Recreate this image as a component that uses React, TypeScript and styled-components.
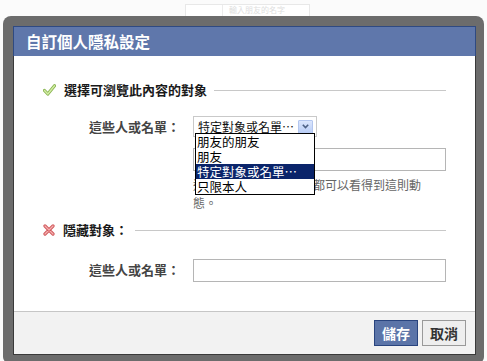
import React from "react";
import styled, { createGlobalStyle } from "styled-components";

const GlobalStyle = createGlobalStyle`
  html, body {
    margin: 0;
    padding: 0;
    background: #ffffff;
  }
  body {
    font-family: "Noto Sans CJK TC", "Noto Sans", sans-serif;
  }
  * { box-sizing: border-box; }
`;

const options = ["朋友的朋友", "朋友", "特定對象或名單⋯", "只限本人"];

const CheckIcon = () => (
  <svg width="13" height="12" viewBox="0 0 13 12">
    <path d="M1.5 6.5 L4.8 10 L11.5 1.8" fill="none" stroke="#8ab452" strokeWidth="3.2" strokeLinecap="round" strokeLinejoin="round" />
    <path d="M1.5 6.5 L4.8 10 L11.5 1.8" fill="none" stroke="#d2eda3" strokeWidth="1.4" strokeLinecap="round" strokeLinejoin="round" />
  </svg>
);

const CrossIcon = () => (
  <svg width="12" height="12" viewBox="0 0 12 12">
    <path d="M2 2 L10 10 M10 2 L2 10" fill="none" stroke="#d0585b" strokeWidth="3.2" strokeLinecap="round" />
    <path d="M2 2 L10 10 M10 2 L2 10" fill="none" stroke="#f5b0b0" strokeWidth="1.3" strokeLinecap="round" />
  </svg>
);

const ArrowIcon = () => (
  <svg width="7" height="5" viewBox="0 0 7 5">
    <path d="M0.8 0.8 L3.5 3.6 L6.2 0.8" fill="none" stroke="#4d6185" strokeWidth="1.6" />
  </svg>
);

export default function App() {
  return (
    <>
      <GlobalStyle />
      <Page>
        <TopBar>
          <SearchBox>
            <SearchButton />
            <SearchField>輸入朋友的名字</SearchField>
          </SearchBox>
        </TopBar>
        <Frame>
          <Dialog>
            <Title>自訂個人隱私設定</Title>
            <Body>
              <SectionHead>
                <CheckIcon />
                <HeadText>選擇可瀏覽此內容的對象</HeadText>
                <Rule />
              </SectionHead>
              <Row $top={19}>
                <Label>這些人或名單：</Label>
                <Field>
                  <SelectWrap>
                    <Select>
                      <SelectText>特定對象或名單⋯</SelectText>
                      <ArrowButton><ArrowIcon /></ArrowButton>
                    </Select>
                    <OptionList>
                      {options.map((o, i) => (
                        <OptionItem key={o} $selected={i === 2}>{o}</OptionItem>
                      ))}
                    </OptionList>
                  </SelectWrap>
                  <TextInput $top={11} />
                  <Hint>這些名單中的所有朋友都可以看得到這則動態。</Hint>
                </Field>
              </Row>
              <SectionHead $top={10}>
                <CrossIcon />
                <HeadText>隱藏對象：</HeadText>
                <Rule />
              </SectionHead>
              <Row $top={22}>
                <Label>這些人或名單：</Label>
                <Field>
                  <TextInput $top={0} />
                </Field>
              </Row>
            </Body>
            <Footer>
              <Button $primary>儲存</Button>
              <Button>取消</Button>
            </Footer>
          </Dialog>
        </Frame>
      </Page>
    </>
  );
}

const Page = styled.div`
  width: 487px;
  height: 361px;
  overflow: hidden;
  background: #fbfbfb;
`;

const TopBar = styled.div`
  height: 16px;
  padding: 4px 0 0 185px;
`;

const SearchBox = styled.div`
  display: flex;
  width: 125px;
  height: 12px;
  border: 1px solid #e8e8e8;
  border-bottom: none;
  background: #fff;
`;

const SearchButton = styled.div`
  width: 37px;
  border-right: 1px solid #ececec;
`;

const SearchField = styled.div`
  flex: 1;
  padding-left: 6px;
  font-size: 8px;
  line-height: 10px;
  color: #dedede;
`;

const Frame = styled.div`
  margin: 0 3px;
  padding: 10px 8px 8px 10px;
  background: #6c6c6c;
  border-radius: 8px 8px 6px 6px;
`;

const Dialog = styled.div`
  background: #fff;
  border: 1px solid #3a3a3a;
  border-top: none;
`;

const Title = styled.div`
  height: 30px;
  margin: 0 -1px;
  padding-left: 12px;
  background: #5f77ab;
  border: 1px solid #2f4a82;
  border-bottom: none;
  color: #fff;
  font-size: 15.5px;
  font-weight: 700;
  line-height: 29px;
`;

const Body = styled.div`
  height: 255px;
  padding: 26px 29px 0;
`;

const SectionHead = styled.div<{ $top?: number }>`
  display: flex;
  align-items: center;
  height: 15px;
  margin-top: ${(p) => p.$top ?? 0}px;
`;

const HeadText = styled.div`
  margin-left: 8px;
  font-size: 13px;
  font-weight: 700;
  color: #1a1a1a;
  white-space: nowrap;
`;

const Rule = styled.div`
  flex: 1;
  height: 1px;
  margin: 2px 0 0 7px;
  background: #c8c8c8;
`;

const Row = styled.div<{ $top: number }>`
  display: grid;
  grid-template-columns: 137px 253px;
  column-gap: 13px;
  align-items: start;
  margin-top: ${(p) => p.$top}px;
`;

const Label = styled.div`
  height: 22px;
  line-height: 22px;
  text-align: right;
  font-size: 13px;
  font-weight: 700;
  color: #444;
`;

const Field = styled.div`
  display: flex;
  flex-direction: column;
`;

const SelectWrap = styled.div`
  position: relative;
  width: 124px;
`;

const Select = styled.div`
  display: flex;
  align-items: center;
  justify-content: space-between;
  height: 21px;
  padding: 0 3px 0 4px;
  border: 1px solid #c9c9c9;
  background: #fff;
`;

const SelectText = styled.span`
  font-size: 12px;
  color: #111;
  white-space: nowrap;
`;

const ArrowButton = styled.span`
  display: flex;
  align-items: center;
  justify-content: center;
  width: 15px;
  height: 14px;
  border: 1px solid #b3c6ef;
  border-radius: 1px;
  background: linear-gradient(#dbe6fd, #b9cdf6);
`;

const OptionList = styled.ul`
  position: absolute;
  top: 17px;
  left: 2px;
  width: 120px;
  margin: 0;
  padding: 0;
  list-style: none;
  border: 1px solid #000;
  background: #fff;
  z-index: 2;
`;

const OptionItem = styled.li<{ $selected?: boolean }>`
  height: 15px;
  padding-left: 1px;
  font-size: 12.5px;
  line-height: 15px;
  white-space: nowrap;
  color: ${(p) => (p.$selected ? "#fff" : "#000")};
  background: ${(p) => (p.$selected ? "#0a246a" : "#fff")};
`;

const TextInput = styled.div<{ $top: number }>`
  height: 23px;
  margin-top: ${(p) => p.$top}px;
  border: 1px solid #b5b5b5;
  background: #fff;
`;

const Hint = styled.div`
  max-width: 236px;
  margin-top: 5px;
  font-size: 12px;
  line-height: 18px;
  color: #666;
`;

const Footer = styled.div`
  display: flex;
  justify-content: flex-end;
  gap: 4px;
  height: 43px;
  padding: 8px 9px 0;
  background: #f2f2f2;
  border-top: 1px solid #c6c6c6;
`;

const Button = styled.button<{ $primary?: boolean }>`
  width: 44px;
  height: 26px;
  padding: 0;
  font-family: "Noto Sans CJK TC", sans-serif;
  font-size: 14px;
  font-weight: 700;
  color: ${(p) => (p.$primary ? "#fff" : "#333")};
  background: ${(p) => (p.$primary ? "#5b74a8" : "#eeeeee")};
  border: 1px solid ${(p) => (p.$primary ? "#29447e" : "#999")};
  cursor: pointer;
`;
